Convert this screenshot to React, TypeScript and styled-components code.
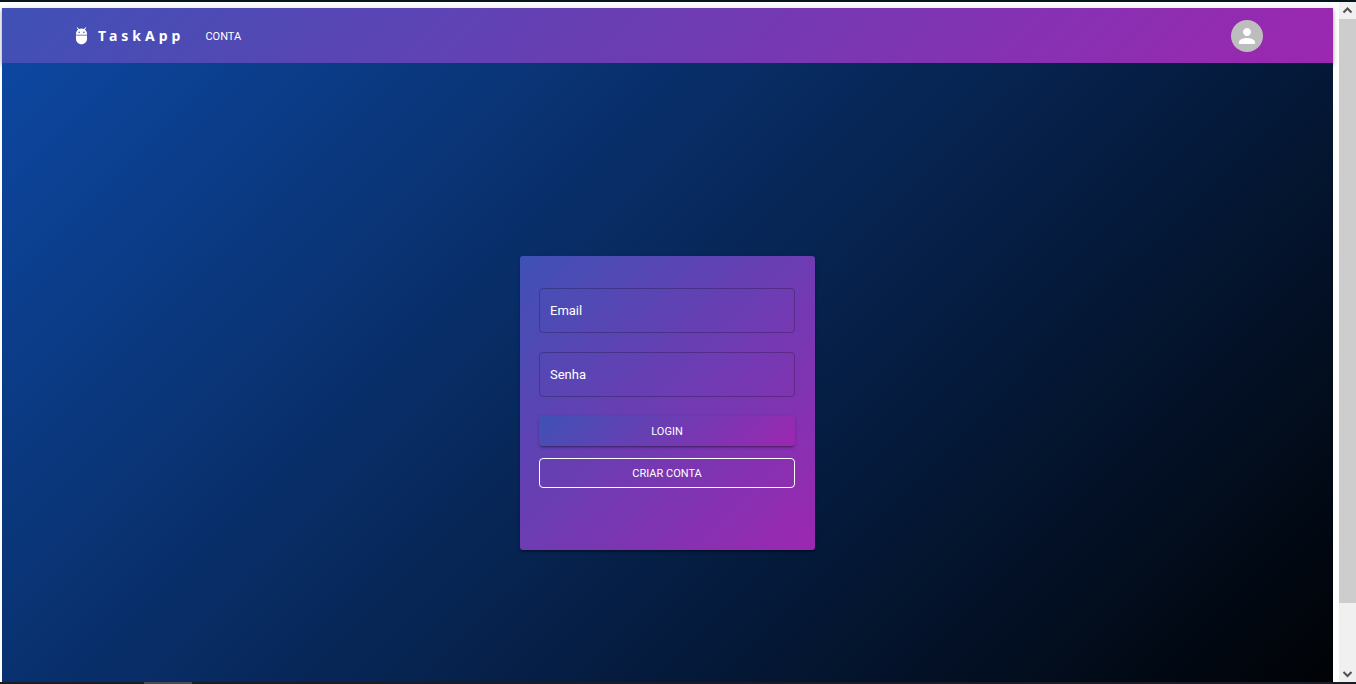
import React from 'react';
import styled, { createGlobalStyle } from 'styled-components';

const accentGradient = 'linear-gradient(135deg, #3f51b5 0%, #9c27b0 100%)';

const GlobalStyle = createGlobalStyle`
  *, *::before, *::after { box-sizing: border-box; }
  body {
    margin: 0;
    background: #fff;
    color: #fff;
    font-family: Roboto, "Liberation Sans", sans-serif;
  }
`;

const Frame = styled.div`
  height: 100vh;
  display: flex;
  flex-direction: column;
  overflow: hidden;
`;

const TopEdge = styled.div`
  flex: none;
  height: 2px;
  background: #04151b;
`;

const BottomEdge = styled.div`
  flex: none;
  height: 2px;
  padding-left: 144px;
  background: #1b1c25;
`;

const ActiveMark = styled.div`
  width: 48px;
  height: 2px;
  background: #4b4b55;
`;

const Viewport = styled.div`
  flex: 1;
  min-height: 0;
  display: flex;
`;

const Page = styled.div`
  flex: 1;
  min-width: 0;
  padding: 6px 6px 0 2px;
  overflow: hidden;
`;

const AppBar = styled.header`
  position: relative;
  background: ${accentGradient};
  box-shadow: 0 2px 3px rgba(0, 0, 0, 0.2), 0 3px 4px rgba(0, 0, 0, 0.14),
    0 1px 8px rgba(0, 0, 0, 0.12);
`;

const Toolbar = styled.div`
  display: flex;
  align-items: center;
  max-width: 1229px;
  height: 55px;
  margin: 0 auto;
  padding: 0 19px;
`;

const Brand = styled.a`
  display: flex;
  align-items: center;
  gap: 7px;
  color: #fff;
  text-decoration: none;
  font: bold 14px/24px "Noto Sans", "Open Sans", sans-serif;
  letter-spacing: 4px;
`;

const BrandIcon = styled.svg`
  width: 19px;
  height: 19px;
  fill: currentColor;
`;

const Nav = styled.nav`
  flex: 1;
  padding-left: 16px;
`;

const NavButton = styled.button`
  padding: 6px 5px 4px;
  border: 0;
  background: none;
  color: #fff;
  font: 11px/20px Roboto, "Liberation Sans", sans-serif;
  text-transform: uppercase;
  cursor: pointer;
`;

const Avatar = styled.button`
  display: grid;
  place-items: center;
  width: 32px;
  height: 32px;
  padding: 0;
  border: 0;
  border-radius: 50%;
  background: #bdbdbd;
  color: #fff;
  cursor: pointer;

  svg {
    width: 24px;
    height: 24px;
    fill: currentColor;
  }
`;

const Main = styled.main`
  display: flex;
  align-items: center;
  justify-content: center;
  height: calc(100vh - 4px);
  background: linear-gradient(135deg, #0d47a1 0%, #000 100%);
  position: relative;
`;

const Card = styled.form`
  display: flex;
  flex-direction: column;
  width: 295px;
  padding: 32px 20px 62px 19px;
  border-radius: 3px;
  background: ${accentGradient};
  box-shadow: 0 2px 1px rgba(0, 0, 0, 0.2), 0 1px 1px rgba(0, 0, 0, 0.14),
    0 1px 3px rgba(0, 0, 0, 0.12);
`;

const Field = styled.div`
  position: relative;
  height: 45px;
  margin-bottom: 19px;
`;

const FieldLabel = styled.label`
  position: absolute;
  top: 13px;
  left: 11px;
  font-size: 13px;
  line-height: 20px;
  pointer-events: none;
`;

const FieldInput = styled.input`
  width: 100%;
  height: 100%;
  padding: 0 11px;
  border: 1px solid rgba(0, 0, 0, 0.23);
  border-radius: 4px;
  outline: none;
  background: transparent;
  color: #fff;
  font: 13px/20px Roboto, "Liberation Sans", sans-serif;

  &:focus + ${FieldLabel}, &:not(:placeholder-shown) + ${FieldLabel} {
    top: -10px;
    font-size: 11px;
  }
`;

const ActionButton = styled.button<{ $outlined?: boolean }>`
  height: 30px;
  margin-bottom: ${(p) => (p.$outlined ? '0' : '12px')};
  padding: 2px 12px 0;
  border: ${(p) => (p.$outlined ? '1px solid #fff' : '0')};
  border-radius: 4px;
  background: ${(p) => (p.$outlined ? 'transparent' : accentGradient)};
  box-shadow: ${(p) =>
    p.$outlined
      ? 'none'
      : '0 2px 1px -1px rgba(0, 0, 0, 0.2), 0 2px 2px rgba(0, 0, 0, 0.14), 0 1px 4px rgba(0, 0, 0, 0.12)'};
  color: #fff;
  font: 11px/20px Roboto, "Liberation Sans", sans-serif;
  text-transform: uppercase;
  cursor: pointer;
`;

const ScrollTrack = styled.div`
  display: flex;
  flex-direction: column;
  flex: none;
  width: 17px;
  background: #f0f0f0;
`;

const ScrollArrow = styled.svg`
  flex: none;
  width: 17px;
  height: 17px;
  fill: none;
  stroke: #505050;
  stroke-width: 2;
`;

const ScrollRail = styled.div`
  flex: 1;
`;

const ScrollThumb = styled.div`
  height: 90.4%;
  background: #cdcdcd;
`;

type TextFieldProps = { id: string; label: string; type: string };

const TextField = ({ id, label, type }: TextFieldProps) => (
  <Field>
    <FieldInput id={id} type={type} placeholder=" " />
    <FieldLabel htmlFor={id}>{label}</FieldLabel>
  </Field>
);

export default function App() {
  return (
    <Frame>
      <GlobalStyle />
      <TopEdge />
      <Viewport>
        <Page>
          <AppBar>
            <Toolbar>
              <Brand href="#">
                <BrandIcon viewBox="0 0 24 24" aria-hidden="true">
                  <path d="M5 16c0 3.87 3.13 7 7 7s7-3.13 7-7v-4H5v4zM16.12 4.37l2.1-2.1-.82-.83-2.3 2.31C14.16 3.28 13.12 3 12 3s-2.16.28-3.09.75L6.6 1.44l-.82.83 2.1 2.1C6.14 5.64 5 7.68 5 10v1h14v-1c0-2.32-1.14-4.36-2.88-5.63zM9 9c-.55 0-1-.45-1-1s.45-1 1-1 1 .45 1 1-.45 1-1 1zm6 0c-.55 0-1-.45-1-1s.45-1 1-1 1 .45 1 1-.45 1-1 1z" />
                </BrandIcon>
                TaskApp
              </Brand>
              <Nav>
                <NavButton type="button">Conta</NavButton>
              </Nav>
              <Avatar type="button" aria-label="Perfil">
                <svg viewBox="0 0 24 24" aria-hidden="true">
                  <path d="M12 12c2.21 0 4-1.79 4-4s-1.79-4-4-4-4 1.79-4 4 1.79 4 4 4zm0 2c-2.67 0-8 1.34-8 4v2h16v-2c0-2.66-5.33-4-8-4z" />
                </svg>
              </Avatar>
            </Toolbar>
          </AppBar>
          <Main>
            <Card>
              <TextField id="email" label="Email" type="email" />
              <TextField id="senha" label="Senha" type="password" />
              <ActionButton type="button">Login</ActionButton>
              <ActionButton type="button" $outlined>
                Criar conta
              </ActionButton>
            </Card>
          </Main>
        </Page>
        <ScrollTrack aria-hidden="true">
          <ScrollArrow viewBox="0 0 17 17">
            <path d="M4.500 10.500 8.500 6.500 12.500 10.500" />
          </ScrollArrow>
          <ScrollRail>
            <ScrollThumb />
          </ScrollRail>
          <ScrollArrow viewBox="0 0 17 17">
            <path d="M4.500 7 8.500 11 12.500 7" />
          </ScrollArrow>
        </ScrollTrack>
      </Viewport>
      <BottomEdge>
        <ActiveMark />
      </BottomEdge>
    </Frame>
  );
}
